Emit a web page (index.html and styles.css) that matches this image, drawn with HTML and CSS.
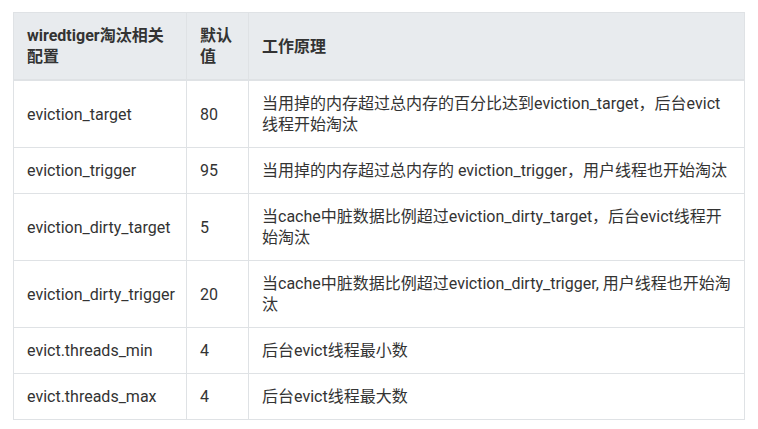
FILE: index.html
```html
<!DOCTYPE html>
<html lang="zh-CN">
<head>
<meta charset="utf-8">
<link rel="stylesheet" href="styles.css">
</head>
<body>
<table class="cfg">
  <colgroup>
    <col class="c1">
    <col class="c2">
    <col class="c3">
  </colgroup>
  <thead>
    <tr>
      <th>wiredtiger淘汰相关配置</th>
      <th>默认值</th>
      <th>工作原理</th>
    </tr>
  </thead>
  <tbody>
    <tr>
      <td>eviction_target</td>
      <td>80</td>
      <td>当用掉的内存超过总内存的百分比达到eviction_target，后台evict线程开始淘汰</td>
    </tr>
    <tr>
      <td>eviction_trigger</td>
      <td>95</td>
      <td>当用掉的内存超过总内存的 eviction_trigger，用户线程也开始淘汰</td>
    </tr>
    <tr>
      <td>eviction_dirty_target</td>
      <td>5</td>
      <td>当cache中脏数据比例超过eviction_dirty_target，后台evict线程开始淘汰</td>
    </tr>
    <tr>
      <td>eviction_dirty_trigger</td>
      <td>20</td>
      <td>当cache中脏数据比例超过eviction_dirty_trigger, 用户线程也开始淘汰</td>
    </tr>
    <tr>
      <td>evict.threads_min</td>
      <td>4</td>
      <td>后台evict线程最小数</td>
    </tr>
    <tr>
      <td>evict.threads_max</td>
      <td>4</td>
      <td>后台evict线程最大数</td>
    </tr>
  </tbody>
</table>
</body>
</html>
```

FILE: styles.css
```css
html, body {
  margin: 0;
  padding: 0;
  background: #ffffff;
}
body {
  padding: 12px 0 0 13px;
  font-family: Roboto, "Noto Sans CJK SC", sans-serif;
  font-size: 16px;
  color: #333333;
}
.cfg {
  border-collapse: collapse;
  table-layout: fixed;
  width: 731px;
}
.c1 { width: 173px; }
.c2 { width: 62px; }
.c3 { width: 496px; }
.cfg th,
.cfg td {
  border: 1px solid #dfe2e5;
  padding: 12px 12px 12px 13px;
  line-height: 21px;
  text-align: left;
  vertical-align: middle;
}
.cfg th {
  background: #e8ebee;
  font-weight: 700;
  border-bottom: 2px solid #dfe2e5;
}
```
